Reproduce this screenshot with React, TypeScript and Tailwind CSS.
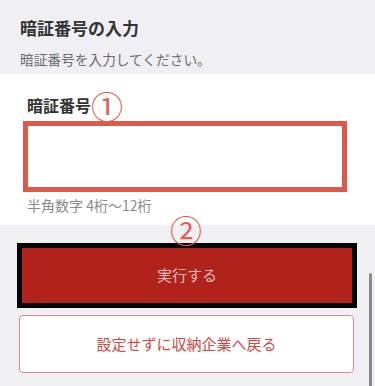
import React from "react";

const font = { fontFamily: '"Noto Sans CJK JP", "Noto Sans", sans-serif' };

export default function App() {
  return (
    <div
      className="relative w-[375px] h-[386px] overflow-hidden bg-[#efeff4]"
      style={font}
    >
      {/* header */}
      <div className="px-5 pt-4 pb-[5px] h-[74px]">
        <h1 className="text-[17px] leading-[24px] font-bold text-[#333333]">
          暗証番号の入力
        </h1>
        <p className="mt-[9px] text-[13.7px] leading-[20px] text-[#6b6b6b]">
          暗証番号を入力してください。
        </p>
      </div>

      {/* form section */}
      <div className="relative bg-white h-[151px] pl-[23px] pt-[17px]">
        <div className="flex items-center h-[28px] pl-[4px]">
          <span className="text-[16px] leading-[24px] font-bold text-[#333333]">
            暗証番号
          </span>
          <span className="ml-[0px] text-[32px] leading-[28px] text-[#e0604c]">
            ①
          </span>
        </div>
        <div className="mt-[2px] w-[324px] h-[71px] border-[5px] border-[#dd5a4a] bg-white" />
        <p className="mt-[3px] pl-[4px] text-[14px] leading-[20px] text-[#8a8a8a]">
          半角数字 4桁〜12桁
        </p>
        <span className="absolute left-[170px] top-[141px] text-[32px] leading-[28px] text-[#e0604c]">
          ②
        </span>
      </div>

      {/* buttons */}
      <div className="pt-[18px] flex flex-col">
        <div className="ml-[17px] w-[340px] h-[65px] border-[5px] border-black bg-[#b0221a] flex items-center justify-center">
          <span className="text-[15px] text-white/70">実行する</span>
        </div>
        <button className="mt-[7px] ml-[19px] w-[335px] h-[58px] rounded-[4px] border border-[#dc8782] bg-white flex items-center justify-center">
          <span className="text-[15px] text-[#cf4a45]">設定せずに収納企業へ戻る</span>
        </button>
      </div>

      {/* scrollbar */}
      <div className="absolute left-[369px] top-[273px] w-[3px] h-[120px] rounded-full bg-[#8a8a8e]" />
    </div>
  );
}
